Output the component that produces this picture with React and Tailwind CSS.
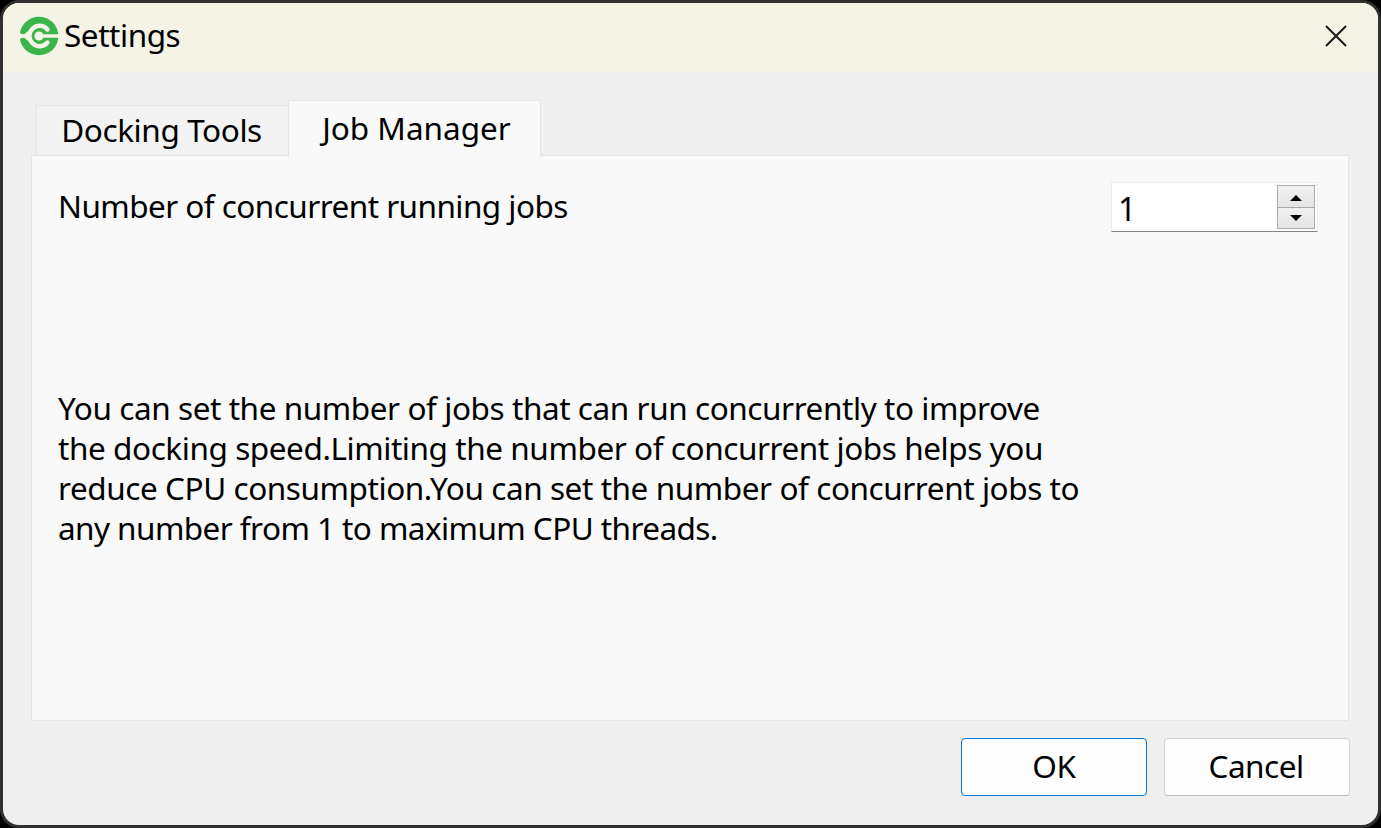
import React from "react";

function Logo() {
  return (
    <svg width="40" height="40" viewBox="0 0 40 40" className="shrink-0">
      <circle cx="20" cy="20" r="19.3" fill="#39b54a" />
      <path d="M28.5 13.5 A10.2 10.2 0 1 0 28.5 26.5" fill="none" stroke="#f5f2e6" strokeWidth="4.4" strokeLinecap="round" />
      <path d="M-1 14.5 L0.8 15.2 C0.8 17.6 2.2 18.3 4 18.2 C6 18 7.4 17 8.2 15 L11 20 L8.2 25 C7.4 23 6 22 4 21.8 C2.2 21.7 0.8 22.4 0.8 24.8 L-1 25.5Z" fill="#f5f2e6" />
      <path d="M20 20 H41" stroke="#f5f2e6" strokeWidth="3.6" />
      <circle cx="20" cy="20" r="4.6" fill="#f5f2e6" />
    </svg>
  );
}

function Spin() {
  return (
    <div className="-mt-px flex h-[50px] w-[207px] items-center justify-between border border-[#ececec] border-b-[#858585] bg-white pl-[6px] pr-[2px]">
      <span className="mt-[3px] text-[32px] leading-none">1</span>
      <div className="flex h-[44px] w-[38px] flex-col border border-[#ababab]">
        <div className="flex h-[22px] items-center justify-center border-b border-[#ababab] bg-linear-to-b from-[#f0f0f0] to-[#e5e5e5]">
          <svg width="12" height="6" viewBox="0 0 12 6" className="mt-[2px]"><path d="M6 0L12 6H0Z" fill="#000" /></svg>
        </div>
        <div className="flex h-[20px] items-center justify-center bg-linear-to-b from-[#f0f0f0] to-[#e5e5e5]">
          <svg width="12" height="6" viewBox="0 0 12 6"><path d="M0 0H12L6 6Z" fill="#000" /></svg>
        </div>
      </div>
    </div>
  );
}

export default function App() {
  return (
    <div className="h-[828px] w-[1381px] overflow-hidden bg-black font-['Noto_Sans',sans-serif] text-black">
      <div className="flex h-full flex-col overflow-hidden rounded-[19px] border-[3px] border-[#303030] bg-[#efefef]">
        <header className="flex h-[69px] items-center justify-between bg-[#f5f2e6] pb-[3px] pl-4 pr-[31px]">
          <div className="flex items-center gap-[5px]">
            <Logo />
            <h1 className="-mt-[3px] text-[31.5px] leading-none tracking-[-0.45px]">Settings</h1>
          </div>
          <svg width="22" height="22" viewBox="0 0 22 22"><path d="M1 1L21 21M21 1L1 21" stroke="#1a1a1a" strokeWidth="2" /></svg>
        </header>
        <div className="mt-7 ml-[33px] flex h-[55px] items-end">
          <div className="flex h-[50px] w-[252px] items-center justify-center border border-r-0 border-b-0 border-[#e5e5e5] bg-[#f3f3f3] pr-[2px] pb-[2px] text-[31.5px] leading-none">
            <span className="whitespace-nowrap tracking-[-0.4px]">Docking Tools</span>
          </div>
          <div className="relative z-10 -mb-[2px] flex h-[57px] w-[253px] items-center justify-center rounded-t-[2px] border border-b-0 border-[#e5e5e5] bg-[#f9f9f9] pb-[2px] text-[31.5px] leading-none">
            <span className="whitespace-nowrap pl-[4px]">Job Manager</span>
          </div>
        </div>
        <main className="ml-7 h-[566px] w-[1318px] border border-[#e5e5e5] bg-[#f9f9f9] pl-[26px] pr-[30px]">
          <div className="flex items-start justify-between pt-[27px]">
            <span className="mt-[3px] whitespace-nowrap text-[31.5px] leading-[40px] tracking-[-0.55px]">Number of concurrent running jobs</span>
            <Spin />
          </div>
          <div className="mt-[156px] whitespace-nowrap text-[31.5px] leading-[40px] tracking-[-0.43px]">
            <div>You can set the number of jobs that can run concurrently to improve</div>
            <div>the docking speed.Limiting the number of concurrent jobs helps you</div>
            <div>reduce CPU consumption.You can set the number of concurrent jobs to</div>
            <div className="tracking-[-0.57px]">any number from 1 to maximum CPU threads.</div>
          </div>
        </main>
        <footer className="mt-[17px] flex justify-end gap-[17px] pr-7">
          <button className="h-[58px] w-[186px] rounded-[4px] border border-[#0078d4] bg-[#fdfdfd] pb-[2px] text-[31.5px] leading-none tracking-[-0.4px]">OK</button>
          <button className="h-[58px] w-[186px] rounded-[4px] border border-[#d0d0d0] border-b-[#bcbcbc] bg-[#fdfdfd] pr-[2px] pb-[2px] text-[31.5px] leading-none tracking-[-0.5px]">Cancel</button>
        </footer>
      </div>
    </div>
  );
}
